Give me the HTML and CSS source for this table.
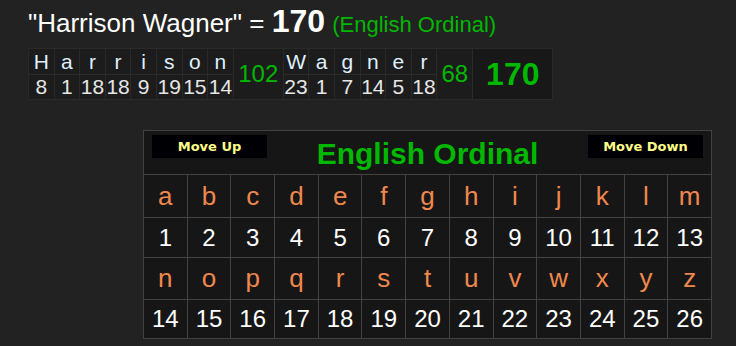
FILE: index.html
```html
<!DOCTYPE html>
<html>
<head>
<meta charset="utf-8">
<link rel="stylesheet" href="styles.css">
</head>
<body>
<div class="page">
  <div class="title"><span class="name">"Harrison Wagner" = </span><span class="total">170</span> <span class="cipher">(English Ordinal)</span></div>

  <div class="words">
    <div class="lt">H</div><div class="lt">a</div><div class="lt">r</div><div class="lt">r</div><div class="lt">i</div><div class="lt">s</div><div class="lt">o</div><div class="lt">n</div>
    <div class="sum">102</div>
    <div class="lt">W</div><div class="lt">a</div><div class="lt">g</div><div class="lt">n</div><div class="lt">e</div><div class="lt">r</div>
    <div class="sum">68</div>
    <div class="grand">170</div>
    <div class="nm">8</div><div class="nm">1</div><div class="nm">18</div><div class="nm">18</div><div class="nm">9</div><div class="nm">19</div><div class="nm">15</div><div class="nm">14</div>
    <div class="nm">23</div><div class="nm">1</div><div class="nm">7</div><div class="nm">14</div><div class="nm">5</div><div class="nm">18</div>
  </div>

  <div class="chart">
    <div class="head">
      <div class="btn left">Move Up</div>
      <div class="chart-title">English Ordinal</div>
      <div class="btn right">Move Down</div>
    </div>
    <div class="c l">a</div><div class="c l">b</div><div class="c l">c</div><div class="c l">d</div><div class="c l">e</div><div class="c l">f</div><div class="c l">g</div><div class="c l">h</div><div class="c l">i</div><div class="c l">j</div><div class="c l">k</div><div class="c l">l</div><div class="c l">m</div>
    <div class="c n">1</div><div class="c n">2</div><div class="c n">3</div><div class="c n">4</div><div class="c n">5</div><div class="c n">6</div><div class="c n">7</div><div class="c n">8</div><div class="c n">9</div><div class="c n">10</div><div class="c n">11</div><div class="c n">12</div><div class="c n">13</div>
    <div class="c l">n</div><div class="c l">o</div><div class="c l">p</div><div class="c l">q</div><div class="c l">r</div><div class="c l">s</div><div class="c l">t</div><div class="c l">u</div><div class="c l">v</div><div class="c l">w</div><div class="c l">x</div><div class="c l">y</div><div class="c l">z</div>
    <div class="c n">14</div><div class="c n">15</div><div class="c n">16</div><div class="c n">17</div><div class="c n">18</div><div class="c n">19</div><div class="c n">20</div><div class="c n">21</div><div class="c n">22</div><div class="c n">23</div><div class="c n">24</div><div class="c n">25</div><div class="c n">26</div>
  </div>
</div>
</body>
</html>
```

FILE: styles.css
```css
html, body {
  margin: 0;
  padding: 0;
  background: #222222;
  font-family: "Liberation Sans", Arial, sans-serif;
  color: #ffffff;
}

.page {
  padding: 5px 0 0 28px;
  width: 708px;
  height: 341px;
  overflow: hidden;
}

.title {
  font-size: 26px;
  line-height: 1;
  white-space: nowrap;
}

.name {
  font-size: 26px;
  color: #ffffff;
}

.total {
  font-size: 32px;
  font-weight: bold;
  color: #ffffff;
}

.cipher {
  font-size: 22px;
  color: #00b800;
}

.words {
  margin-top: 11px;
  display: inline-grid;
  grid-template-columns: repeat(8, 24.6px) 49px repeat(6, 24.6px) 35px 79px;
  grid-template-rows: 25px 24px;
  gap: 1px;
  padding: 1px;
  background: #2a2a2a;
  vertical-align: top;
}

.words > div {
  background: #1c1c1c;
  display: flex;
  align-items: center;
  justify-content: center;
  font-size: 21px;
  white-space: nowrap;
}

.lt {
  color: #dff0ff;
}

.nm {
  color: #e6e6e6;
}

.sum {
  grid-row: span 2;
  color: #00b800;
  font-size: 24px !important;
}

.grand {
  grid-row: span 2;
  color: #00b800;
  font-size: 32px !important;
  font-weight: bold;
  background: #181818 !important;
}

.chart {
  margin: 30px 0 0 115px;
  width: 569px;
  display: grid;
  grid-template-columns: repeat(13, 1fr);
  grid-template-rows: 43px 42px 39px 41px 38px;
  gap: 1px;
  padding: 1px;
  box-sizing: border-box;
  background: #424242;
}

.head {
  grid-column: 1 / -1;
  background: #161616;
  display: grid;
  grid-template-columns: 1fr auto 1fr;
  align-items: center;
  padding: 0 8px;
}

.btn {
  align-self: start;
  margin-top: 4px;
  width: 115px;
  height: 23px;
  background: #000004;
  color: #ffff88;
  font-family: "DejaVu Sans", Verdana, sans-serif;
  font-weight: bold;
  font-size: 13px;
  display: flex;
  align-items: center;
  justify-content: center;
}

.btn.left {
  justify-self: start;
}

.btn.right {
  justify-self: end;
}

.chart-title {
  font-size: 30px;
  font-weight: bold;
  color: #00b800;
  line-height: 1;
  padding-top: 2px;
}

.c {
  background: #161616;
  display: flex;
  align-items: center;
  justify-content: center;
}

.c.l {
  font-size: 26px;
  color: #f0884e;
}

.c.n {
  font-size: 24px;
  color: #ffffff;
}
```
